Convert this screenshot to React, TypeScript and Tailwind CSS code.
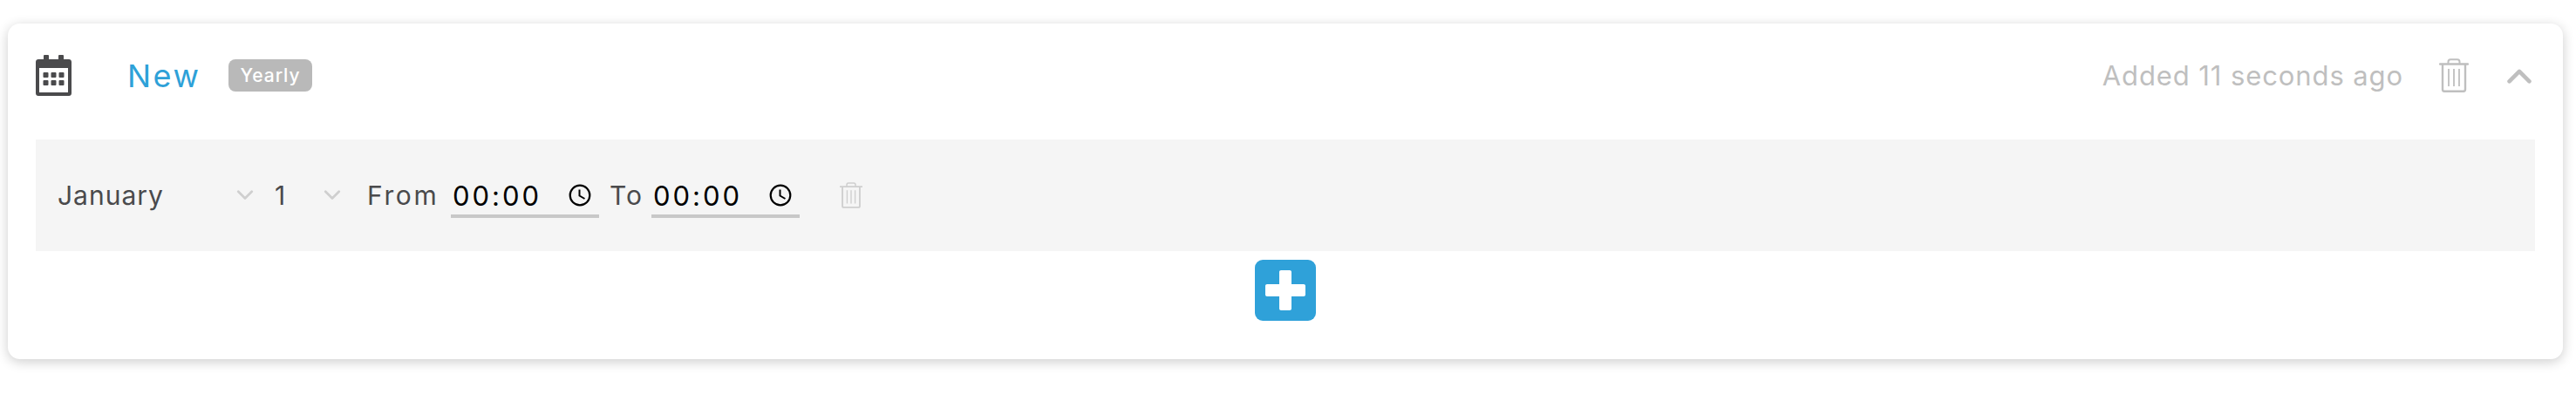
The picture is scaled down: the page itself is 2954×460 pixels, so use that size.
const font = "[font-family:Inter,'Liberation_Sans',sans-serif]";

function Trash({ className, stroke }: { className: string; stroke: string }) {
  return (
    <svg viewBox="0 0 34 39" fill="none" className={className} stroke={stroke}>
      <path d="M1 6.500H33" strokeWidth="2.400" strokeLinecap="round" />
      <path d="M10.500 6V4C10.500 2.400 11.400 1.300 13 1.300H21C22.600 1.300 23.500 2.400 23.500 4V6" strokeWidth="2" />
      <path d="M4 7V35.500C4 36.800 4.700 37.700 6 37.700H28C29.300 37.700 30 36.800 30 35.500V7" strokeWidth="2.400" />
      <path d="M11 12V32M17 12V32M23 12V32" strokeWidth="1.800" />
    </svg>
  );
}

function Chevron({ className, stroke, width, up }: { className: string; stroke: string; width: number; up?: boolean }) {
  return (
    <svg viewBox="0 0 22 14" fill="none" className={className} stroke={stroke} strokeWidth={width}>
      <path d={up ? "M2 12L11 3L20 12" : "M2 2L11 11L20 2"} strokeLinecap="round" strokeLinejoin="round" />
    </svg>
  );
}

function Clock() {
  return (
    <svg viewBox="0 0 26 26" fill="none" stroke="#000" className="w-[26px] h-[26px] shrink-0">
      <circle cx="13" cy="13" r="11.300" strokeWidth="2.200" />
      <path d="M12.500 6.500V13.500L18.500 17" strokeWidth="2" />
    </svg>
  );
}

function TimeInput() {
  return (
    <div className="w-[170px] h-[52px] flex items-center border-b-4 border-[#c8c8c8] pl-[2px] pr-[9px] justify-between">
      <span className="text-[31px] text-black tracking-[3px] leading-none mt-[4px]">00:00</span>
      <div className="mt-[3px]"><Clock /></div>
    </div>
  );
}

export default function App() {
  return (
    <div className={`w-[2954px] h-[460px] bg-white pt-[27px] pl-[9px] ${font}`}>
      <div className="w-[2930px] h-[385px] bg-white rounded-[14px] shadow-[0_3px_14px_rgba(0,0,0,0.2)] flex flex-col">
        <header className="h-[133px] shrink-0 flex items-center pl-8 pr-[36px] pb-[14px]">
          <svg viewBox="0 0 41 47" className="w-[41px] h-[47px] shrink-0" fill="#4a4a4c">
            <rect x="9" y="0" width="6" height="9" rx="1" />
            <rect x="26" y="0" width="6" height="9" rx="1" />
            <path fillRule="evenodd" d="M3 5H38C39.700 5 41 6.300 41 8V44C41 45.700 39.700 47 38 47H3C1.300 47 0 45.700 0 44V8C0 6.300 1.300 5 3 5ZM4 15V43H37V15Z" />
            <rect x="8.500" y="20" width="6" height="6" rx="1" /><rect x="17.500" y="20" width="6" height="6" rx="1" /><rect x="26.500" y="20" width="6" height="6" rx="1" />
            <rect x="8.500" y="29" width="6" height="6" rx="1" /><rect x="17.500" y="29" width="6" height="6" rx="1" /><rect x="26.500" y="29" width="6" height="6" rx="1" />
          </svg>
          <span className="ml-[64px] w-[116px] text-[36px] leading-none text-[#2ea1d8] tracking-[2.500px]">New</span>
          <span className="w-[96px] h-[37px] flex items-center justify-center rounded-[8px] bg-[#b9b9b9] text-white text-[21px] leading-none font-medium tracking-[1px]">Yearly</span>
          <span className="ml-auto text-[31px] leading-none text-[#bfbfbf] tracking-[0.9px]">Added 11 seconds ago</span>
          <Trash className="ml-[41px] w-[34px] h-[39px] shrink-0" stroke="#bfbfbf" />
          <Chevron className="ml-[44px] w-[28px] h-[18px] shrink-0" stroke="#bfbfbf" width={3.600} up />
        </header>
        <section className="ml-8 mr-8 h-[128px] shrink-0 bg-[#f5f5f5] flex items-center pl-[25px] text-[30px] text-[#4a4a4c]">
          <span className="w-[205px] leading-none tracking-[1px]">January</span>
          <Chevron className="w-[20px] h-[12px] shrink-0" stroke="#cfcfcf" width={3.200} />
          <span className="ml-[24px] w-[56px] leading-none">1</span>
          <Chevron className="w-[20px] h-[12px] shrink-0" stroke="#cfcfcf" width={3.200} />
          <span className="ml-[30px] w-[96px] leading-none tracking-[2.600px]">From</span>
          <TimeInput />
          <span className="ml-[12px] w-[48px] leading-none tracking-[2px]">To</span>
          <TimeInput />
          <Trash className="ml-[46px] w-[26px] h-[30px] shrink-0" stroke="#cfcfcf" />
        </section>
        <div className="ml-8 mr-8 mt-[10px] flex justify-center">
          <button className="w-[70px] h-[70px] rounded-[9px] bg-[#2fa1d9] flex items-center justify-center">
            <svg viewBox="0 0 46 46" className="w-[46px] h-[46px]" fill="#fff">
              <path d="M16 2C16 .9 16.900 0 18 0H28C29.100 0 30 .9 30 2V16H44C45.100 16 46 16.900 46 18V28C46 29.100 45.100 30 44 30H30V44C30 45.100 29.100 46 28 46H18C16.900 46 16 45.100 16 44V30H2C.9 30 0 29.100 0 28V18C0 16.900 .9 16 2 16H16Z" />
            </svg>
          </button>
        </div>
      </div>
    </div>
  );
}
